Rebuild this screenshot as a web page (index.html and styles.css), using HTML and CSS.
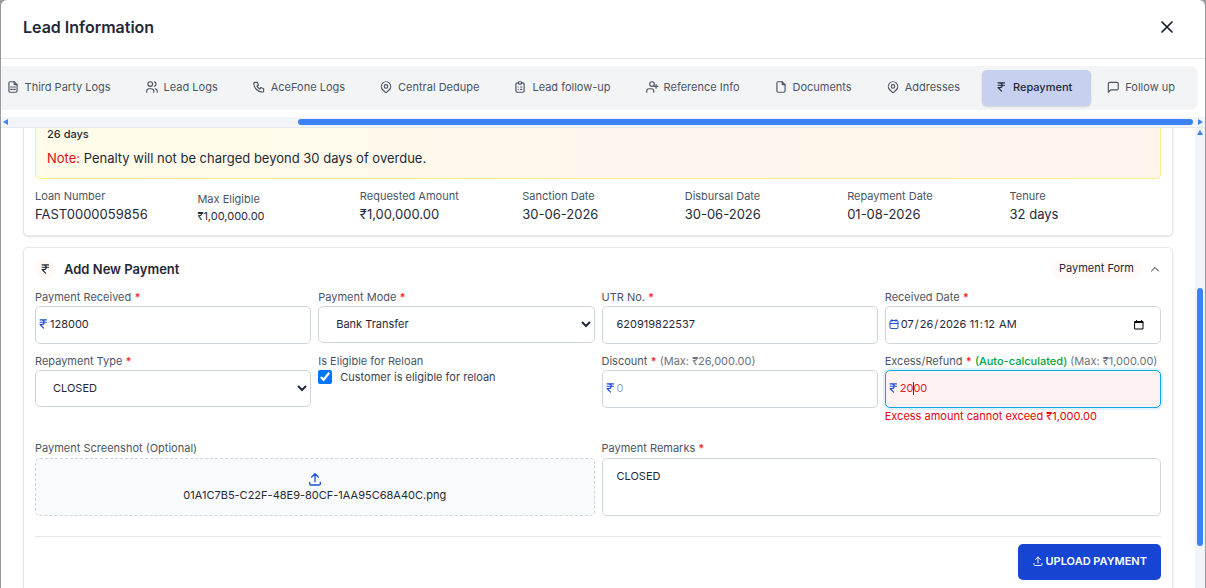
FILE: index.html
```
<!DOCTYPE html>
<html lang="en">
  <head>
    <meta charset="utf-8">
    <meta name="viewport" content="width=device-width, initial-scale=1">
    <title>Lead Information</title>
    <link rel="stylesheet" href="styles.css">
  </head>
  <body>
    <!-- shared icons -->
    <svg class="sprite" aria-hidden="true">
      <symbol id="rupee" viewBox="0 0 24 24"><path d="M18 5H7h3a4 4 0 0 1 0 8H7l6 6M7 9h11"/></symbol>
      <symbol id="pin" viewBox="0 0 24 24"><path d="M9 11a3 3 0 1 0 6 0a3 3 0 0 0-6 0"/><path d="M17.657 16.657 13.414 20.9a2 2 0 0 1-2.827 0l-4.244-4.243a8 8 0 1 1 11.314 0z"/></symbol>
      <symbol id="upload" viewBox="0 0 24 24"><path d="M4 17v2a2 2 0 0 0 2 2h12a2 2 0 0 0 2-2v-2M7 9l5-5 5 5M12 4v12"/></symbol>
    </svg>

    <div class="modal">
      <header class="modal-header">
        <h1>Lead Information</h1>
        <button class="close" aria-label="Close">
          <svg class="icon-lg" viewBox="0 0 24 24"><path d="M18 6 6 18M6 6l12 12"/></svg>
        </button>
      </header>

      <nav class="tabs">
        <button class="tab"><svg class="icon" viewBox="0 0 24 24"><path d="M14 3v4a1 1 0 0 0 1 1h4"/><path d="M17 21H7a2 2 0 0 1-2-2V5a2 2 0 0 1 2-2h7l5 5v11a2 2 0 0 1-2 2zM8 12h3M13 12h3M8 16h3M13 16h3"/></svg>Third Party Logs</button>
        <button class="tab"><svg class="icon" viewBox="0 0 24 24"><path d="M5 7a4 4 0 1 0 8 0a4 4 0 1 0-8 0M3 21v-2a4 4 0 0 1 4-4h4a4 4 0 0 1 4 4v2M16 3.13a4 4 0 0 1 0 7.75M21 21v-2a4 4 0 0 0-3-3.85"/></svg>Lead Logs</button>
        <button class="tab"><svg class="icon" viewBox="0 0 24 24"><path d="M5 4h4l2 5-2.500 1.500a11 11 0 0 0 5 5L15 13l5 2v4a2 2 0 0 1-2 2A16 16 0 0 1 3 6a2 2 0 0 1 2-2"/></svg>AceFone Logs</button>
        <button class="tab"><svg class="icon"><use href="#pin"/></svg>Central Dedupe</button>
        <button class="tab"><svg class="icon" viewBox="0 0 24 24"><path d="M9 5H7a2 2 0 0 0-2 2v12a2 2 0 0 0 2 2h10a2 2 0 0 0 2-2V7a2 2 0 0 0-2-2h-2"/><path d="M9 5a2 2 0 0 1 2-2h2a2 2 0 0 1 2 2 2 2 0 0 1-2 2h-2a2 2 0 0 1-2-2zM9 12h.01M13 12h2M9 16h.01M13 16h2"/></svg>Lead follow-up</button>
        <button class="tab"><svg class="icon" viewBox="0 0 24 24"><path d="M8 7a4 4 0 1 0 8 0a4 4 0 0 0-8 0M16 11h6M19 8v6M3 21v-2a4 4 0 0 1 4-4h4a4 4 0 0 1 4 4v2"/></svg>Reference Info</button>
        <button class="tab"><svg class="icon" viewBox="0 0 24 24"><path d="M14 3v4a1 1 0 0 0 1 1h4"/><path d="M17 21H7a2 2 0 0 1-2-2V5a2 2 0 0 1 2-2h7l5 5v11a2 2 0 0 1-2 2z"/></svg>Documents</button>
        <button class="tab"><svg class="icon"><use href="#pin"/></svg>Addresses</button>
        <button class="tab active"><svg class="icon"><use href="#rupee"/></svg>Repayment</button>
        <button class="tab"><svg class="icon" viewBox="0 0 24 24"><path d="M4 21V6a2 2 0 0 1 2-2h13a2 2 0 0 1 2 2v9a2 2 0 0 1-2 2H8z"/></svg>Follow up</button>
      </nav>

      <div class="hscroll">
        <span class="arrow arrow-left"></span>
        <span class="hscroll-space"></span>
        <span class="hscroll-thumb"></span>
        <span class="arrow arrow-right"></span>
      </div>

      <div class="body-row">
        <main class="content">
          <section class="card loan-card">
            <div class="notice">
              <p class="days">26 days</p>
              <p class="note"><span class="note-label">Note:</span> Penalty will not be charged beyond 30 days of overdue.</p>
            </div>
            <dl class="details">
              <div><dt>Loan Number</dt><dd>FAST0000059856</dd></div>
              <div class="detail-small"><dt>Max Eligible</dt><dd>₹1,00,000.00</dd></div>
              <div><dt>Requested Amount</dt><dd>₹1,00,000.00</dd></div>
              <div><dt>Sanction Date</dt><dd>30-06-2026</dd></div>
              <div><dt>Disbursal Date</dt><dd>30-06-2026</dd></div>
              <div><dt>Repayment Date</dt><dd>01-08-2026</dd></div>
              <div><dt>Tenure</dt><dd>32 days</dd></div>
            </dl>
          </section>

          <form class="card payment-card">
            <div class="card-header">
              <span class="badge-icon"><svg class="icon"><use href="#rupee"/></svg></span>
              <h2>Add New Payment</h2>
              <span class="badge">Payment Form</span>
              <button type="button" class="toggle" aria-label="Collapse">
                <svg class="icon-sm" viewBox="0 0 24 24"><path d="m5 16 7-7 7 7"/></svg>
              </button>
            </div>

            <div class="fields">
              <div class="field">
                <label for="received">Payment Received <b>*</b></label>
                <div class="input-box">
                  <svg class="icon"><use href="#rupee"/></svg>
                  <input id="received" type="text" value="128000">
                </div>
              </div>
              <div class="field">
                <label for="mode">Payment Mode <b>*</b></label>
                <select id="mode"><option>Bank Transfer</option></select>
              </div>
              <div class="field">
                <label for="utr">UTR No. <b>*</b></label>
                <div class="input-box plain">
                  <input id="utr" type="text" value="620919822537">
                </div>
              </div>
              <div class="field">
                <label for="date">Received Date <b>*</b></label>
                <div class="input-box date-box">
                  <svg class="icon-sm" viewBox="0 0 24 24"><path d="M4 7a2 2 0 0 1 2-2h12a2 2 0 0 1 2 2v12a2 2 0 0 1-2 2H6a2 2 0 0 1-2-2zM16 3v4M8 3v4M4 11h16"/></svg>
                  <input id="date" type="date" value="2026-07-26">
                  <input type="time" value="11:12" aria-label="Received time">
                  <button type="button" class="picker" aria-label="Open calendar">
                    <svg class="icon-sm" viewBox="0 0 24 24"><path d="M4 5h16v15H4zM4 7h16M7 3v2M17 3v2"/></svg>
                  </button>
                </div>
              </div>

              <div class="field">
                <label for="type">Repayment Type <b>*</b></label>
                <select id="type"><option>CLOSED</option></select>
              </div>
              <div class="field">
                <span class="label">Is Eligible for Reloan</span>
                <label class="check" for="reloan"><input id="reloan" type="checkbox" checked>Customer is eligible for reloan</label>
              </div>
              <div class="field">
                <label for="discount">Discount <b>*</b> <span class="hint">(Max: ₹26,000.00)</span></label>
                <div class="input-box">
                  <svg class="icon"><use href="#rupee"/></svg>
                  <input id="discount" type="text" placeholder="0">
                </div>
              </div>
              <div class="field">
                <label for="excess">Excess/Refund <b>*</b> <span class="auto">(Auto-calculated)</span> <span class="hint">(Max: ₹1,000.00)</span></label>
                <div class="input-box invalid">
                  <svg class="icon"><use href="#rupee"/></svg>
                  <input id="excess" type="text" value="2000">
                  <span class="caret"></span>
                </div>
                <p class="error">Excess amount cannot exceed ₹1,000.00</p>
              </div>
            </div>

            <div class="fields wide">
              <div class="field">
                <label for="file">Payment Screenshot (Optional)</label>
                <label class="dropzone" for="file">
                  <svg class="icon-md"><use href="#upload"/></svg>
                  <span>01A1C7B5-C22F-48E9-80CF-1AA95C68A40C.png</span>
                </label>
                <input id="file" type="file" hidden>
              </div>
              <div class="field">
                <label for="remarks">Payment Remarks <b>*</b></label>
                <textarea id="remarks">CLOSED</textarea>
              </div>
            </div>

            <div class="card-footer">
              <button type="button" class="submit"><svg class="icon-sm"><use href="#upload"/></svg>UPLOAD PAYMENT</button>
            </div>
          </form>
        </main>

        <div class="vscroll">
          <span class="arrow arrow-up"></span>
          <span class="vscroll-thumb"></span>
        </div>
      </div>
    </div>
  </body>
</html>
```

FILE: styles.css
```
* {
  box-sizing: border-box;
}

body {
  margin: 0;
  height: 100vh;
  padding: 0 1px;
  overflow: hidden;
  background: #9a9b9f;
  color: #1f2937;
  font-family: Inter, "Liberation Sans", sans-serif;
  font-size: 11px;
  font-weight: 400;
  line-height: 17px;
}

h1, h2, p, dl, dd {
  margin: 0;
}

button, input, select, textarea {
  font: inherit;
  color: inherit;
}

button {
  border: 0;
  padding: 0;
  background: none;
  cursor: pointer;
}

svg {
  flex: none;
  fill: none;
  stroke: currentColor;
  stroke-width: 2;
  stroke-linecap: round;
  stroke-linejoin: round;
}

.sprite {
  display: none;
}

.icon {
  width: 14px;
  height: 14px;
}

.icon-sm {
  width: 12px;
  height: 12px;
}

.icon-md {
  width: 16px;
  height: 16px;
}

.icon-lg {
  width: 20px;
  height: 20px;
}

.modal {
  display: flex;
  flex-direction: column;
  height: 100%;
  background: #fff;
  border-radius: 6px 6px 0 0;
  overflow: hidden;
}

.modal-header {
  display: flex;
  flex: none;
  justify-content: space-between;
  align-items: center;
  padding: 16px 28px 20px 22px;
  border-bottom: 1px solid #e5e7eb;
}

.modal-header h1 {
  font-size: 16px;
  font-weight: 600;
  line-height: 22px;
}

.close {
  height: 20px;
  color: #111827;
}

/* tabs are scrolled to their right end */
.tabs {
  display: flex;
  flex: none;
  justify-content: flex-end;
  gap: 3px;
  margin: 7px 7px 7px 0;
  padding: 4px;
  background: #f3f4f6;
  border-radius: 0 8px 8px 0;
  overflow: hidden;
}

.tab {
  display: flex;
  flex: none;
  align-items: center;
  gap: 5px;
  height: 36px;
  padding: 0 19px 2px 12px;
  border-radius: 5px;
  color: #4b5563;
}

.tab .icon {
  stroke-width: 2;
}

.tab.active {
  background: #c7d0ef;
  color: #1f2937;
  font-weight: 500;
  box-shadow: 0 1px 2px rgba(0, 0, 0, 0.15);
}

/* scrollbars */
.hscroll {
  display: flex;
  flex: none;
  align-items: center;
  height: 11px;
  padding: 0 2px;
  background: #f1f5f9;
  border-bottom: 1px solid #e5e7eb;
}

.hscroll-space {
  flex: 290;
}

.hscroll-thumb {
  flex: 894;
  height: 6px;
  margin-right: 5px;
  border-radius: 3px;
  background: #3b82f6;
}

.arrow {
  flex: none;
  border: 3px solid transparent;
}

.arrow-left {
  border-left: 0;
  border-right: 5px solid #3b82f6;
}

.arrow-right {
  border-right: 0;
  border-left: 5px solid #3b82f6;
}

.arrow-up {
  border-top: 0;
  border-bottom: 5px solid #3b82f6;
}

.body-row {
  display: flex;
  flex: 1;
  min-height: 0;
}

.vscroll {
  display: flex;
  flex-direction: column;
  align-items: center;
  width: 10px;
  padding: 2px 0 42px;
  background: #f1f5f9;
}

.vscroll-thumb {
  width: 6px;
  height: 62%;
  margin-top: auto;
  border-radius: 3px;
  background: #3b82f6;
}

.content {
  flex: 1;
  padding: 0 22px;
  overflow: hidden;
}

.card {
  padding: 11px;
  border: 1px solid #e5e7eb;
  border-radius: 5px;
  background: #fff;
  box-shadow: 0 1px 2px rgba(0, 0, 0, 0.12);
}

.loan-card {
  padding-top: 0;
  border-top: 0;
  border-radius: 0 0 5px 5px;
}

.payment-card {
  margin-top: 11px;
}

.notice {
  padding: 0 11px 10px;
  border: 1px solid #ffec85;
  border-top: 0;
  border-radius: 0 0 5px 5px;
  background: linear-gradient(to right, #fefce8, #fff7ed 50%, #fff5ec);
}

.days {
  padding-bottom: 7px;
  font-weight: 500;
  line-height: 13px;
}

.note {
  font-size: 13px;
  line-height: 20px;
}

.note-label {
  color: #dc0b18;
}

.details {
  display: grid;
  grid-template-columns: repeat(7, 1fr);
  gap: 11px;
  align-items: end;
  padding-top: 9px;
}

.details dt {
  color: #4b5563;
}

.details dd {
  font-size: 13px;
  line-height: 19px;
}

.details .detail-small dd {
  font-size: 11px;
  line-height: 16px;
}

.card-header {
  display: flex;
  align-items: center;
  height: 20px;
}

.card-header h2 {
  margin: 0 auto 0 9px;
  font-size: 13px;
  font-weight: 600;
}

.badge-icon {
  display: flex;
  align-items: center;
  justify-content: center;
  width: 20px;
  height: 20px;
  border-radius: 10px;
  background: #fff8f5;
}

.badge {
  padding: 0 7px 2px;
  border-radius: 9px;
  background: #fffaf8;
}

.toggle {
  display: flex;
  margin-left: 8px;
}

.fields {
  display: grid;
  grid-template-columns: repeat(4, 1fr);
  gap: 9px 7px;
  margin-top: 10px;
}

.fields.wide {
  grid-template-columns: repeat(2, 1fr);
  margin-top: 15px;
}

.field > label,
.label {
  display: block;
  color: #4b5563;
  white-space: nowrap;
}

.wide .field > label:first-child {
  padding-bottom: 1px;
}

.field b {
  color: #fb2c36;
}

.field .hint {
  color: #6b7280;
}

.field .auto {
  color: #00a63e;
  font-weight: 500;
}

.input-box {
  position: relative;
  display: flex;
  align-items: center;
  height: 38px;
  padding: 0 14px 2px 0;
  border: 1px solid #d1d5dc;
  border-radius: 5px;
}

.input-box > svg {
  color: #1d4ed8;
}

.input-box input {
  flex: 1;
  min-width: 0;
  padding: 0;
  border: 0;
  outline: 0;
  background: none;
}

.input-box input::placeholder {
  color: #9ca3af;
}

.input-box.plain {
  padding-left: 14px;
}

.input-box.date-box {
  padding-left: 2px;
}

.input-box input[type="date"],
.input-box input[type="time"] {
  flex: none;
}

/* the box has one shared picker button */
.date-box input::-webkit-calendar-picker-indicator {
  display: none;
}

.date-box input[type="date"] {
  width: 68px;
}

.date-box input[type="time"] {
  margin-left: 1px;
}

.picker {
  display: flex;
  margin-left: auto;
  padding: 2px 1px 0;
  color: #000;
}

.input-box.invalid {
  border-color: #0ea5e9;
  background: #fef2f2;
  box-shadow: 0 0 0 2px #e0f2fe;
  color: #dc2626;
}

/* text cursor, between the second and third digit */
.caret {
  position: absolute;
  left: 27px;
  width: 1px;
  height: 13px;
  background: #7f1d1d;
}

select {
  display: block;
  width: 100%;
  height: 37px;
  padding: 0 0 2px 13px;
  border: 1px solid #d1d5dc;
  border-radius: 5px;
  background: #fff;
}

.field > .check {
  display: flex;
  align-items: center;
  gap: 8px;
  height: 14px;
  color: #374151;
}

.check input {
  width: 14px;
  height: 14px;
  margin: 0;
  accent-color: #0075ff;
}

.error {
  color: #e7000b;
}

.field > .dropzone {
  display: flex;
  flex-direction: column;
  align-items: center;
  justify-content: center;
  height: 58px;
  border: 1px dashed #d1d5dc;
  border-radius: 5px;
  background: #f9fafb;
  color: #1f2937;
}

.dropzone svg {
  color: #1d4ed8;
}

textarea {
  display: block;
  width: 100%;
  height: 58px;
  padding: 9px 14px;
  border: 1px solid #d1d5dc;
  border-radius: 5px;
  resize: none;
}

.card-footer {
  display: flex;
  justify-content: flex-end;
  margin-top: 20px;
  padding: 7px 0 20px;
  border-top: 1px solid #e5e7eb;
}

.submit {
  display: flex;
  align-items: center;
  gap: 2px;
  height: 36px;
  padding: 0 14px 2px;
  border-radius: 5px;
  background: #1645d3;
  color: #fff;
  font-weight: 600;
}
```
